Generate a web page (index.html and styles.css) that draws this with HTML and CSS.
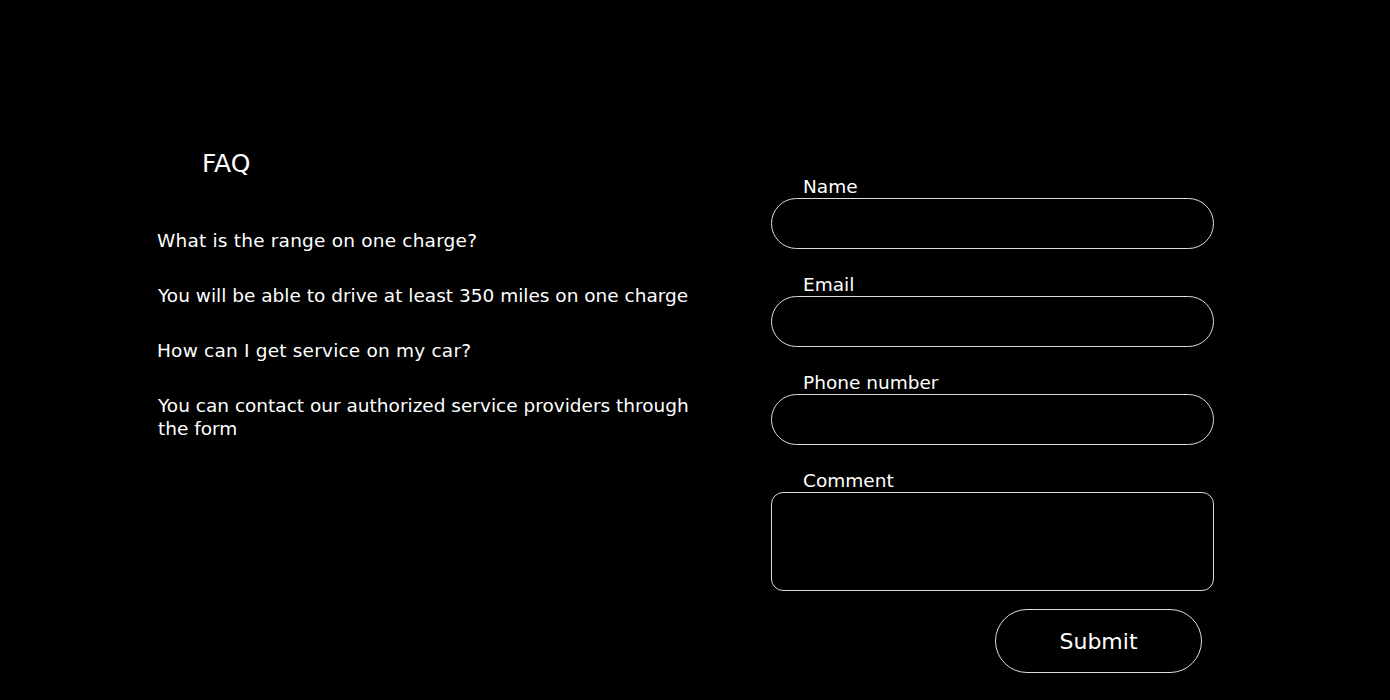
FILE: index.html
```html
<!doctype html>
<html lang="en">

<head>
  <meta charset="utf-8" />
  <meta name="viewport" content="width=device-width,initial-scale=1" />
  <title>FAQ</title>
  <link rel="stylesheet" href="styles.css">
</head>

<body>
  <div class="page">
    <div class="faq">
      <h2 class="faq-title">FAQ</h2>
      <p class="question">What is the range on one charge?</p>
      <p class="answer">You will be able to drive at least 350 miles on one charge</p>
      <p class="question">How can I get service on my car?</p>
      <p class="answer">You can contact our authorized service providers through the form</p>
    </div>
    <form class="contact">
      <label class="field">
        <span class="label">Name</span>
        <input type="text" class="input">
      </label>
      <label class="field">
        <span class="label">Email</span>
        <input type="email" class="input">
      </label>
      <label class="field">
        <span class="label">Phone number</span>
        <input type="tel" class="input">
      </label>
      <label class="field">
        <span class="label">Comment</span>
        <textarea class="input comment"></textarea>
      </label>
      <div class="actions">
        <button type="button" class="submit">Submit</button>
      </div>
    </form>
  </div>
</body>

</html>
```

FILE: styles.css
```css
html,
body {
  height: 100%;
  margin: 0;
  padding: 0;
  background: #000;
}

* {
  font-family: "DejaVu Sans", Verdana, sans-serif;
  box-sizing: border-box;
}

.page {
  display: flex;
  align-items: flex-start;
  padding-top: 147px;
  padding-left: 157px;
  color: #fff;
}

.faq {
  width: 556px;
}

.faq-title {
  margin: 2px 0 50px 45px;
  font-size: 25px;
  font-weight: normal;
  line-height: 30px;
}

.faq p {
  margin: 0 0 32px 0;
  font-size: 18.5px;
  line-height: 23px;
}

.faq .question {
  letter-spacing: 0.2px;
}

.faq .answer {
  padding-left: 1px;
}

.contact {
  display: flex;
  flex-direction: column;
  width: 443px;
  margin-left: 58px;
  padding-top: 29px;
}

.field {
  display: flex;
  flex-direction: column;
  margin-bottom: 25px;
}

.field .label {
  padding-left: 32px;
  font-size: 18.5px;
  line-height: 22px;
}

.input {
  height: 51px;
  border: solid 1px #ddd;
  border-radius: 26px;
  background: #000;
  color: #fff;
  font-size: 18px;
  padding: 0 24px;
  outline: none;
}

.comment {
  height: 99px;
  border-radius: 12px;
  resize: none;
  padding: 12px 24px;
}

.field:last-of-type {
  margin-bottom: 18px;
}

.actions {
  display: flex;
  justify-content: flex-end;
  padding-right: 12px;
}

.submit {
  width: 207px;
  height: 64px;
  border: solid 1px #ddd;
  border-radius: 32px;
  background: #000;
  color: #fff;
  font-size: 22px;
  cursor: pointer;
}
```
